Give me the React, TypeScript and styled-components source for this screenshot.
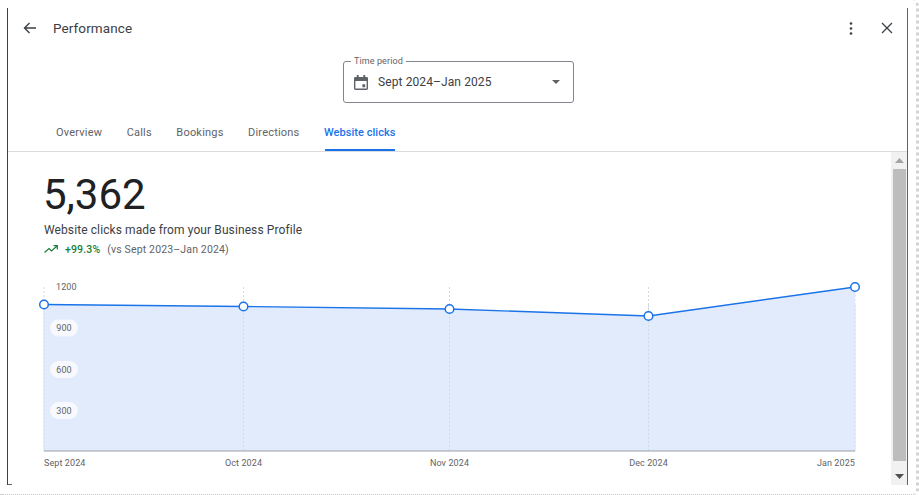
import React from "react";
import styled, { createGlobalStyle } from "styled-components";

const Global = createGlobalStyle`
  html, body { margin: 0; padding: 0; background: #fff; }
  body { font-family: Roboto, "Liberation Sans", sans-serif; overflow: hidden; }
`;

const Screen = styled.div`
  width: 919px;
  height: 495px;
  padding: 8px 8px 9px 7px;
  box-sizing: border-box;
  border-right: 3px dotted #d2d2d2;
  border-bottom: 1px dotted #c4c4c4;
  border-top-right-radius: 6px;
  border-bottom-right-radius: 6px;
  background: #fff;
`;

const Dialog = styled.div`
  position: relative;
  height: 100%;
  border-left: 1px solid #3c4043;
  border-right: 1px solid #5f6368;
  display: flex;
  flex-direction: column;
  box-sizing: border-box;
  &::after {
    content: "";
    position: absolute;
    left: 0;
    bottom: 0;
    width: 4px;
    height: 1px;
    background: #5f6368;
  }
`;

const Header = styled.header`
  height: 40px;
  display: flex;
  align-items: center;
  padding: 0 11px 0 12px;
`;

const IconBtn = styled.button`
  border: 0;
  background: none;
  padding: 0;
  width: 18px;
  height: 18px;
  display: flex;
  align-items: center;
  justify-content: center;
  color: #3c4043;
`;

const Title = styled.h1`
  margin: 0 0 1px 15px;
  font-size: 13.5px;
  font-weight: 400;
  color: #3c4043;
  letter-spacing: 0.1px;
  flex: 1;
`;

const Actions = styled.div`
  display: flex;
  gap: 18px;
  align-items: center;
`;

const SelectRow = styled.div`
  display: flex;
  justify-content: center;
  padding: 13px 0 0 2px;
`;

const Select = styled.div`
  position: relative;
  width: 231px;
  height: 42px;
  box-sizing: border-box;
  border: 1px solid #80868b;
  border-radius: 3px;
  display: flex;
  align-items: center;
  padding: 0 13px 0 10px;
`;

const FloatLabel = styled.span`
  position: absolute;
  top: -6px;
  left: 7px;
  padding: 0 3px;
  background: #fff;
  font-size: 9px;
  line-height: 11px;
  color: #5f6368;
  letter-spacing: 0.1px;
`;

const SelectText = styled.span`
  margin-left: 10px;
  flex: 1;
  font-size: 12px;
  color: #3c4043;
  letter-spacing: 0.1px;
`;

const Tabs = styled.nav`
  height: 49px;
  box-sizing: border-box;
  display: flex;
  gap: 24.5px;
  padding: 0 0 0 48px;
  border-bottom: 1px solid #dadce0;
`;

const Tab = styled.div<{ $active?: boolean }>`
  position: relative;
  height: 100%;
  box-sizing: border-box;
  display: flex;
  align-items: center;
  padding-top: 10px;
  font-size: 11px;
  font-weight: ${(p) => (p.$active ? 500 : 400)};
  letter-spacing: ${(p) => (p.$active ? "0.05px" : "0.2px")};
  color: ${(p) => (p.$active ? "#1a73e8" : "#5f6368")};
  &::after {
    content: "";
    display: ${(p) => (p.$active ? "block" : "none")};
    position: absolute;
    left: 1px;
    right: 1px;
    bottom: 0;
    height: 2px;
    background: #1a73e8;
  }
`;

const Body = styled.div`
  flex: 1;
  min-height: 0;
  display: flex;
`;

const Main = styled.main`
  flex: 1;
  min-width: 0;
  display: flex;
  flex-direction: column;
  padding: 21px 0 0 36px;
`;

const BigNumber = styled.div`
  margin-left: -1px;
  font-size: 42px;
  line-height: 44px;
  font-weight: 400;
  color: #202124;
`;

const Subtitle = styled.div`
  margin-top: 5px;
  font-size: 12px;
  line-height: 16px;
  color: #3c4043;
  letter-spacing: 0.1px;
`;

const Trend = styled.div`
  margin-top: 4px;
  display: flex;
  align-items: center;
  height: 14px;
  font-size: 10.5px;
  color: #5f6368;
  letter-spacing: 0.15px;
`;

const TrendValue = styled.span`
  margin: 0 7px 0 7px;
  color: #188038;
  font-weight: 500;
`;

const ChartSvg = styled.svg`
  display: block;
  margin: 19px 0 0 -36px;
  flex: none;
`;

const Scrollbar = styled.div`
  width: 16px;
  background: #f1f1f1;
  display: flex;
  flex-direction: column;
  align-items: center;
`;

const ScrollArrow = styled.div`
  height: 17px;
  width: 100%;
  display: flex;
  align-items: center;
  justify-content: center;
`;

const ScrollThumb = styled.div`
  flex: 1;
  width: 13px;
  margin: 0 0 7px 1px;
  background: #bdbdbd;
`;

const tickFont = { fontSize: 9, fontFamily: "Roboto, sans-serif", fill: "#5f6368", letterSpacing: 0.1 };
const top = 275;
const pts = [
  [36, 304.5],
  [235.5, 306.5],
  [441.5, 309],
  [640.5, 316],
  [847, 287],
].map(([x, y]) => [x, y - top]);
const base = 451 - top;
const line = pts.map((p) => p.join(",")).join(" ");
const labels = ["Sept 2024", "Oct 2024", "Nov 2024", "Dec 2024", "Jan 2025"];

export default function App() {
  return (
    <Screen>
      <Global />
      <Dialog>
        <Header>
          <IconBtn aria-label="Back">
            <svg width="13" height="12" viewBox="0 0 13 12" fill="none">
              <path d="M13 6H1.500M6.500 1 1.500 6l5 5" stroke="#3c4043" strokeWidth="1.400" />
            </svg>
          </IconBtn>
          <Title>Performance</Title>
          <Actions>
            <IconBtn aria-label="More">
              <svg width="4" height="13" viewBox="0 0 4 13" fill="#3c4043">
                <circle cx="2" cy="1.500" r="1.300" />
                <circle cx="2" cy="6.500" r="1.300" />
                <circle cx="2" cy="11.500" r="1.300" />
              </svg>
            </IconBtn>
            <IconBtn aria-label="Close">
              <svg width="12" height="12" viewBox="0 0 12 12" fill="none">
                <path d="M1 1l10 10M11 1 1 11" stroke="#3c4043" strokeWidth="1.300" />
              </svg>
            </IconBtn>
          </Actions>
        </Header>
        <SelectRow>
          <Select>
            <FloatLabel>Time period</FloatLabel>
            <svg width="14" height="15" viewBox="0 0 15 16">
              <path
                fill="#5f6368"
                fillRule="evenodd"
                d="M3 0h2v2h5V0h2v2h1.500A1.500 1.500 0 0 1 15 3.500v11a1.500 1.500 0 0 1-1.500 1.500h-12A1.500 1.500 0 0 1 0 14.500v-11A1.500 1.500 0 0 1 1.500 2H3zM1.500 6.500v8h12v-8zM9 10h3v3H9z"
              />
            </svg>
            <SelectText>Sept 2024–Jan 2025</SelectText>
            <svg width="8" height="4" viewBox="0 0 10 5">
              <path d="M0 0h10L5 5z" fill="#5f6368" />
            </svg>
          </Select>
        </SelectRow>
        <Tabs>
          <Tab>Overview</Tab>
          <Tab>Calls</Tab>
          <Tab>Bookings</Tab>
          <Tab>Directions</Tab>
          <Tab $active>Website clicks</Tab>
        </Tabs>
        <Body>
          <Main>
            <BigNumber>5,362</BigNumber>
            <Subtitle>Website clicks made from your Business Profile</Subtitle>
            <Trend>
              <svg width="14" height="8" viewBox="0 0 14 8" fill="none">
                <path d="M.5 7.500 5 3.500l2.500 2.500L13 1M9.500.7H13.300V4.500" stroke="#188038" strokeWidth="1.200" />
              </svg>
              <TrendValue>+99.3%</TrendValue>
              (vs Sept 2023–Jan 2024)
            </Trend>
            <ChartSvg width="884" height="200" viewBox="0 0 884 200">
              {pts.map(([x]) => (
                <line key={x} x1={x} x2={x} y1={12} y2={base} stroke="#d5d9df" strokeDasharray="2 2" />
              ))}
              <polygon points={`${pts[0][0]},${base} ${line} ${pts[4][0]},${base}`} fill="#e1ebfc" />
              {pts.map(([x]) => (
                <line key={`i${x}`} x1={x} x2={x} y1={30} y2={base} stroke="#ced9e8" strokeDasharray="2 2" />
              ))}
              <line x1={36} x2={847} y1={base} y2={base} stroke="#9aa0a6" />
              <polyline points={line} fill="none" stroke="#1a73e8" strokeWidth="1.400" />
              {pts.map(([x, y]) => (
                <circle key={`c${x}`} cx={x} cy={y} r="4.300" fill="#fff" stroke="#1a73e8" strokeWidth="1.500" />
              ))}
              <text x={48} y={15} style={tickFont}>1200</text>
              {[
                ["900", 53],
                ["600", 94.5],
                ["300", 135.5],
              ].map(([t, y]) => (
                <g key={t}>
                  <rect x={42} y={Number(y) - 8.5} width={28} height={17} rx={8.5} fill="#f7f9fe" />
                  <text x={56} y={Number(y) + 3} textAnchor="middle" style={tickFont}>{t}</text>
                </g>
              ))}
              {labels.map((t, i) => (
                <text
                  key={t}
                  x={i === 0 ? 36 : pts[i][0]}
                  y={191}
                  textAnchor={i === 0 ? "start" : i === 4 ? "end" : "middle"}
                  style={tickFont}
                >
                  {t}
                </text>
              ))}
            </ChartSvg>
          </Main>
          <Scrollbar>
            <ScrollArrow>
              <svg width="9" height="5" viewBox="0 0 9 5"><path d="M4.500 0 9 5H0z" fill="#a3a3a3" /></svg>
            </ScrollArrow>
            <ScrollThumb />
            <ScrollArrow>
              <svg width="9" height="5" viewBox="0 0 9 5"><path d="M0 0h9L4.500 5z" fill="#505050" /></svg>
            </ScrollArrow>
          </Scrollbar>
        </Body>
      </Dialog>
    </Screen>
  );
}
